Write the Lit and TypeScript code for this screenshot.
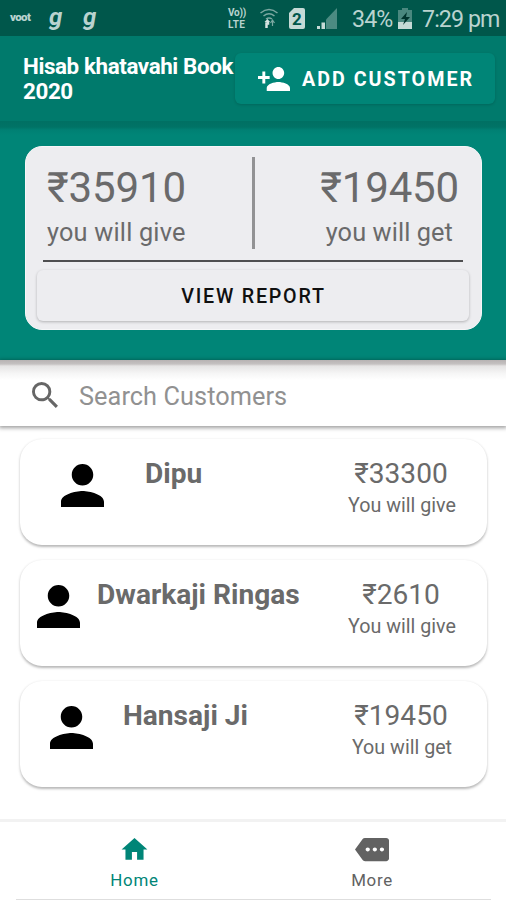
import { LitElement, html, css, svg } from "lit";
import { customElement, property } from "lit/decorators.js";

interface Customer {
  name: string;
  amount: string;
  label: string;
  space: number;
}

const CUSTOMERS: Customer[] = [
  { name: "Dipu", amount: "₹33300", label: "You will give", space: 41 },
  { name: "Dwarkaji Ringas", amount: "₹2610", label: "You will give", space: 17 },
  { name: "Hansaji Ji", amount: "₹19450", label: "You will get", space: 30 },
];

const person = svg`<path d="M12 12c2.21 0 4-1.79 4-4s-1.79-4-4-4-4 1.79-4 4 1.79 4 4 4zm0 2c-2.67 0-8 1.34-8 4v2h16v-2c0-2.66-5.33-4-8-4z"/>`;

@customElement("status-bar")
export class StatusBar extends LitElement {
  static styles = css`
    :host {
      display: flex;
      align-items: center;
      height: 36px;
      box-sizing: border-box;
      padding: 0 7px 0 10px;
      background: #00574b;
      color: #b9d3cf;
      font-size: 23.2px;
      line-height: 36px;
      white-space: nowrap;
    }
    svg { display: block; flex: none; }
    .voot { width: 39px; margin-top: -3px; font: 900 11.5px/12px Roboto, sans-serif; letter-spacing: -0.6px; }
    .g { font: italic 700 24px/26px Roboto, sans-serif; width: 34px; margin-top: -3px; }
    .fill { flex: 1; }
    .volte { display: grid; grid-template-rows: 12px 12px; font: 700 10px/12px Roboto, sans-serif; width: 32px; margin-top: 1px; }
    .volte span { display: block; height: 12px; }
    .vo { letter-spacing: -0.2px; }
    .lte { letter-spacing: 0.4px; }
    .wifi { margin-right: 11px; }
    .sim { margin-right: 12px; }
    .signal { margin-right: 15px; }
    .pct { width: 46px; letter-spacing: -0.9px; margin-top: 2px; }
    .battery { margin-right: 10px; }
    .time { margin-top: 2px; width: 77px; letter-spacing: -0.9px; }
  `;
  render() {
    return html`
      <span class="voot">voot</span>
      <span class="g">g</span>
      <span class="g">g</span>
      <span class="fill"></span>
      <span class="volte"><span class="vo">Vo))</span><span class="lte">LTE</span></span>
      <svg class="wifi" width="18" height="21" viewBox="0 0 18 21" fill="none" stroke="#7ba8a1" stroke-width="1.500">
        <path d="M.5 5Q9-2 17.500 5M3.500 8Q9 3.500 14.500 8M6 11Q9 9 12 11"/>
        <path d="M6.500 20v-4.500h1.500v-2" stroke="#d5e4e1" stroke-width="2.500"/>
        <path d="M4.500 14l3-3 2.500 3z" fill="#d5e4e1" stroke="none"/>
        <path d="M12.500 12v6M10.500 15l2-3 2 3" stroke-width="1.200"/>
      </svg>
      <svg class="sim" width="16" height="21" viewBox="0 0 16 21">
        <path d="M5 0h9q2 0 2 2v17q0 2-2 2H2q-2 0-2-2V5z" fill="#c5dad6"/>
        <text x="8" y="16.500" text-anchor="middle" font-size="17" font-weight="700" font-family="Roboto" fill="#00574b">2</text>
      </svg>
      <svg class="signal" width="20" height="21" viewBox="0 0 20 21">
        <path d="M20 0v21H9V11.500z" fill="#4c8b82"/>
        <path d="M0 18h3v3H0zM4.500 14.500h3.500V21H4.500z" fill="#c5dad6"/>
      </svg>
      <span class="pct">34%</span>
      <svg class="battery" width="14" height="21" viewBox="0 0 14 21">
        <path d="M4 0h6v2h4v19H0V2h4z" fill="#4a887f"/>
        <path d="M0 14h14v7H0z" fill="#c5dad6"/>
        <path d="M9 4L3 11h4l-2 6 7-8H8z" fill="#00342d"/>
      </svg>
      <span class="time">7:29 pm</span>
    `;
  }
}

@customElement("summary-card")
export class SummaryCard extends LitElement {
  static styles = css`
    :host {
      display: block;
      box-sizing: border-box;
      height: 184px;
      padding: 10px 11px 0;
      border: 1px solid #f6f6f8;
      border-radius: 17px;
      background: #ededf0;
      color: #6a6a6b;
    }
    .totals {
      display: flex;
      justify-content: space-between;
      height: 105px;
      margin: 0 7px 0 6px;
      box-sizing: border-box;
      padding: 0 4px;
      border-bottom: 2px solid #4e4e50;
    }
    .side { width: 145px; }
    .amount { font-size: 42px; line-height: 50px; margin-top: 6px; letter-spacing: -0.15px; }
    .label { font-size: 25.3px; line-height: 30px; margin-top: 5px; letter-spacing: 0.2px; }
    .right { text-align: right; }
    .right .label { padding-right: 6px; letter-spacing: 0.1px; }
    .rule { width: 3px; height: 92px; background: #929294; }
    .report {
      display: block;
      width: 432px;
      height: 51px;
      margin-top: 8px;
      padding: 2px 0 0 1px;
      border: 0;
      border-radius: 6px;
      background: #ededf0;
      box-shadow: 0 1px 3px rgba(0, 0, 0, 0.25);
      color: #101010;
      font: 500 19.7px/49px Roboto, sans-serif;
      letter-spacing: 1.76px;
    }
  `;
  render() {
    return html`
      <div class="totals">
        <div class="side"><div class="amount">₹35910</div><div class="label">you will give</div></div>
        <div class="rule"></div>
        <div class="side right"><div class="amount">₹19450</div><div class="label">you will get</div></div>
      </div>
      <button class="report">VIEW REPORT</button>
    `;
  }
}

@customElement("customer-row")
export class CustomerRow extends LitElement {
  @property({ attribute: false }) customer!: Customer;
  static styles = css`
    :host {
      display: flex;
      box-sizing: border-box;
      height: 106px;
      border-radius: 22px;
      background: #fff;
      box-shadow: 0 1.5px 2.5px rgba(0, 0, 0, 0.28);
      color: #6a6a6a;
    }
    .who { display: flex; flex: 1; gap: var(--space); padding-left: var(--space); }
    svg { margin-top: 25px; fill: #000; flex: none; }
    .name { font-size: 28.1px; font-weight: 700; line-height: 34px; margin-top: 18px; white-space: nowrap; }
    .due { width: 120px; margin-right: 25px; text-align: center; }
    .amount { font-size: 28.1px; line-height: 34px; margin: 18px 2px 0 0; }
    .label { font-size: 19.7px; line-height: 24px; margin-top: 3px; }
  `;
  render() {
    const c = this.customer;
    return html`
      <div class="who" style="--space: ${c.space}px">
        <svg width="43" height="43" viewBox="4 4 16 16">${person}</svg>
        <div class="name">${c.name}</div>
      </div>
      <div class="due"><div class="amount">${c.amount}</div><div class="label">${c.label}</div></div>
    `;
  }
}

@customElement("app-root")
export class AppRoot extends LitElement {
  static styles = css`
    :host {
      display: flex;
      flex-direction: column;
      width: 506px;
      height: 900px;
      overflow: hidden;
      background: #fff;
      font-family: Roboto, "Noto Sans", sans-serif;
    }
    .bar {
      display: flex;
      flex: none;
      height: 85px;
      box-sizing: border-box;
      padding: 17px 11px 0 23px;
      background: #007a6c;
    }
    .title { width: 212px; font-size: 22.4px; font-weight: 700; line-height: 25px; color: #fff; margin-top: 1px; white-space: nowrap; letter-spacing: -0.4px; }
    .add {
      display: flex;
      align-items: center;
      width: 260px;
      height: 51px;
      padding: 0 0 0 23px;
      border: 0;
      border-radius: 6px;
      background: #008577;
      box-shadow: 0 1px 3px rgba(0, 0, 0, 0.16);
      color: #fff;
      font: 700 19.7px/51px Roboto, sans-serif;
      letter-spacing: 2px;
      white-space: nowrap;
    }
    .add span { margin-top: 2px; }
    .add svg { fill: #fff; margin-right: 12px; flex: none; }
    .hero {
      flex: none;
      height: 239px;
      box-sizing: border-box;
      padding: 25px 24px 0 25px;
      background: linear-gradient(#007063, #007366 6px, #008073 9px, #008577 14px);
    }
    .search {
      display: flex;
      flex: none;
      align-items: center;
      height: 66px;
      padding-left: 32px;
      background: linear-gradient(#b7b3b3, #c4c1c1 4px, #e5e4e4 6px, #f5f5f5 13px, #fff 20px);
      box-shadow: 0 1px 4px 1px rgba(0, 0, 0, 0.38);
      color: #919191;
      font-size: 25.3px;
      letter-spacing: 0.07px;
    }
    .search svg { fill: #666; margin: 4px 21px 0 0; }
    .search span { margin-top: 6px; }
    .list {
      display: flex;
      flex: 1;
      flex-direction: column;
      gap: 15.2px;
      padding: 13px 19px 0 20px;
    }
    .nav {
      display: grid;
      grid-template-columns: 237px 238px;
      flex: none;
      height: 81px;
      box-sizing: border-box;
      padding: 0 15px 0 16px;
      border-top: 3px solid #f2f2f2;
      font-size: 16.9px;
      letter-spacing: 0.7px;
    }
    .tab {
      display: flex;
      flex-direction: column;
      align-items: center;
      height: 78px;
      box-sizing: border-box;
      border-bottom: 1px solid #dedede;
      color: #626262;
      line-height: 20px;
    }
    .tab svg { margin: 12px 0 5px; fill: currentColor; height: 31px; }
    .active { color: #008577; }
  `;
  render() {
    return html`
      <status-bar></status-bar>
      <div class="bar">
        <div class="title">Hisab khatavahi Book<br />2020</div>
        <button class="add">
          <svg width="32" height="24" viewBox="1 4 22 16" preserveAspectRatio="none">
            <path d="M15 12c2.210 0 4-1.790 4-4s-1.790-4-4-4-4 1.790-4 4 1.790 4 4 4zm-9-2V7H4v3H1v2h3v3h2v-3h3v-2H6zm9 4c-2.670 0-8 1.340-8 4v2h16v-2c0-2.660-5.330-4-8-4z"/>
          </svg><span>ADD CUSTOMER</span>
        </button>
      </div>
      <div class="hero"><summary-card></summary-card></div>
      <div class="search">
        <svg width="26" height="26" viewBox="3 3 17.500 17.500">
          <path d="M15.500 14h-.79l-.28-.27A6.471 6.471 0 0 0 16 9.500 6.500 6.500 0 1 0 9.500 16c1.610 0 3.090-.59 4.230-1.570l.27.28v.79l5 4.990L20.490 19l-4.990-5zm-6 0C7.010 14 5 11.990 5 9.500S7.010 5 9.500 5 14 7.010 14 9.500 11.990 14 9.500 14z"/>
        </svg>
        <span>Search Customers</span>
      </div>
      <div class="list">${CUSTOMERS.map((c) => html`<customer-row .customer=${c}></customer-row>`)}</div>
      <div class="nav">
        <div class="tab active">
          <svg width="31" height="31" viewBox="0 0 24 24" preserveAspectRatio="none"><path d="M10 20v-6h4v6h5v-8h3L12 3 2 12h3v8z"/></svg>
          <span>Home</span>
        </div>
        <div class="tab">
          <svg width="34" height="32" viewBox="0 0 24 24" preserveAspectRatio="none"><path d="M22 3H7c-.69 0-1.230.35-1.590.88L0 12l5.410 8.110c.36.53.97.89 1.660.89H22c1.100 0 2-.9 2-2V5c0-1.100-.9-2-2-2zM9 13.500c-.83 0-1.500-.67-1.500-1.500s.67-1.500 1.500-1.500 1.500.67 1.500 1.500-.67 1.500-1.500 1.500zm5 0c-.83 0-1.500-.67-1.500-1.500s.67-1.500 1.500-1.500 1.500.67 1.500 1.500-.67 1.500-1.500 1.500zm5 0c-.83 0-1.500-.67-1.500-1.500s.67-1.500 1.500-1.500 1.500.67 1.500 1.500-.67 1.500-1.500 1.500z"/></svg>
          <span>More</span>
        </div>
      </div>
    `;
  }
}
